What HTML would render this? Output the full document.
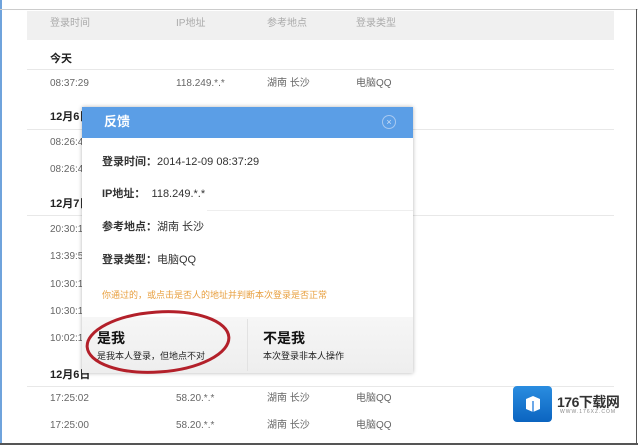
<!DOCTYPE html>
<html><head><meta charset="utf-8"><style>
body{margin:0;width:638px;height:445px;overflow:hidden;background:#fff;font-family:"Liberation Sans","Noto Sans CJK SC",sans-serif;position:relative}
.a{position:absolute;white-space:nowrap;line-height:14px}
.g{font-size:10px;color:#666}
.h{font-size:11px;font-weight:bold;color:#222}
.ln{position:absolute;height:1px;background:#e8e8e8;left:27px;width:587px}
.d{font-size:11px;color:#333}
</style></head><body>
<div class="a" style="left:0;top:0;width:2px;height:445px;background:#6fa3dc"></div>
<div class="a" style="left:0;top:9px;width:638px;height:1px;background:#ccc"></div>
<div class="a" style="left:636px;top:9px;width:1px;height:436px;background:#555"></div>
<div class="a" style="left:0;top:443px;width:638px;height:2px;background:#555"></div>
<div class="a" style="left:27px;top:11px;width:587px;height:29px;background:#f0f0f0"></div>
<div class="a g" style="left:50px;top:17px;color:#aaa">登录时间</div>
<div class="a g" style="left:176px;top:17px;color:#aaa">IP地址</div>
<div class="a g" style="left:267px;top:17px;color:#aaa">参考地点</div>
<div class="a g" style="left:356px;top:17px;color:#aaa">登录类型</div>
<div class="a h" style="left:50px;top:52px">今天</div><div class="ln" style="top:69px"></div>
<div class="a g" style="left:50px;top:77px">08:37:29</div><div class="a g" style="left:176px;top:77px">118.249.*.*</div><div class="a g" style="left:267px;top:77px">湖南 长沙</div><div class="a g" style="left:356px;top:77px">电脑QQ</div>
<div class="a h" style="left:50px;top:110px">12月6日</div><div class="ln" style="top:129px"></div>
<div class="a g" style="left:50px;top:136px">08:26:41</div><div class="a g" style="left:50px;top:163px">08:26:40</div>
<div class="a h" style="left:50px;top:197px">12月7日</div><div class="ln" style="top:215px"></div>
<div class="a g" style="left:50px;top:223px">20:30:11</div><div class="a g" style="left:50px;top:250px">13:39:55</div><div class="a g" style="left:50px;top:278px">10:30:12</div><div class="a g" style="left:50px;top:305px">10:30:11</div><div class="a g" style="left:50px;top:332px">10:02:11</div>
<div class="a h" style="left:50px;top:368px">12月6日</div><div class="ln" style="top:386px"></div>
<div class="a g" style="left:50px;top:392px">17:25:02</div><div class="a g" style="left:176px;top:392px">58.20.*.*</div><div class="a g" style="left:267px;top:392px">湖南 长沙</div><div class="a g" style="left:356px;top:392px">电脑QQ</div>
<div class="a g" style="left:50px;top:419px">17:25:00</div><div class="a g" style="left:176px;top:419px">58.20.*.*</div><div class="a g" style="left:267px;top:419px">湖南 长沙</div><div class="a g" style="left:356px;top:419px">电脑QQ</div>

<div class="a" style="left:82px;top:107px;width:331px;height:266px;background:#fff;box-shadow:0 0 4px rgba(0,0,0,.3)">
<div style="height:31px;background:#5b9ee6"></div>
<div class="a" style="left:22px;top:8px;color:#fff;font-size:13px;font-weight:bold">反馈</div>
<div class="a" style="left:300px;top:8px;width:12px;height:12px;border:1px solid #a8c9f0;border-radius:50%;color:#cfe1f7;font-size:9px;text-align:center;line-height:12px">×</div>
<div class="a d" style="left:20px;top:48px"><b>登录时间：</b>2014-12-09 08:37:29</div>
<div class="a d" style="left:20px;top:80px"><b>IP地址：</b>&nbsp; 118.249.*.*</div>
<div class="a" style="left:125px;top:103px;width:206px;height:1px;background:#eee"></div>
<div class="a d" style="left:20px;top:113px"><b>参考地点：</b>湖南 长沙</div>
<div class="a d" style="left:20px;top:146px"><b>登录类型：</b>电脑QQ</div>
<div class="a" style="left:20px;top:181px;font-size:9px;color:#e8a040">你通过的，或点击是否人的地址并判断本次登录是否正常</div>
<div class="a" style="left:0;top:210px;width:331px;height:56px;background:linear-gradient(#f6f6f6,#eee)"></div>
<div class="a" style="left:165px;top:212px;width:1px;height:52px;background:#e2e2e2"></div>
<div class="a" style="left:15px;top:223px;font-size:14px;font-weight:bold;color:#111;line-height:16px">是我</div>
<div class="a" style="left:15px;top:242px;font-size:9px;color:#222">是我本人登录，但地点不对</div>
<div class="a" style="left:181px;top:223px;font-size:14px;font-weight:bold;color:#111;line-height:16px">不是我</div>
<div class="a" style="left:181px;top:242px;font-size:9px;color:#222">本次登录非本人操作</div>
</div>
<svg class="a" style="left:80px;top:305px" width="160" height="75"><ellipse cx="78" cy="37" rx="71" ry="30" fill="none" stroke="#b3202a" stroke-width="3" transform="rotate(-4 78 37)"/></svg>

<div class="a" style="left:513px;top:386px;width:39px;height:36px;border-radius:4px;background:linear-gradient(#2a8de0,#0b64c0)"></div>
<svg class="a" style="left:522px;top:393px" width="22" height="22"><path d="M4 6 L11 3 L18 6 L18 16 L11 19 L4 16Z" fill="#fff"/><path d="M11 8 L11 19" stroke="#3a8be0" stroke-width="1.5"/></svg>
<div class="a" style="left:557px;top:395px;font-size:14px;font-weight:bold;color:#333;letter-spacing:-0.5px">176下载网</div>
<div class="a" style="left:560px;top:408px;font-size:5px;color:#888;letter-spacing:1px;line-height:8px">WWW.176XZ.COM</div>
</body></html>
